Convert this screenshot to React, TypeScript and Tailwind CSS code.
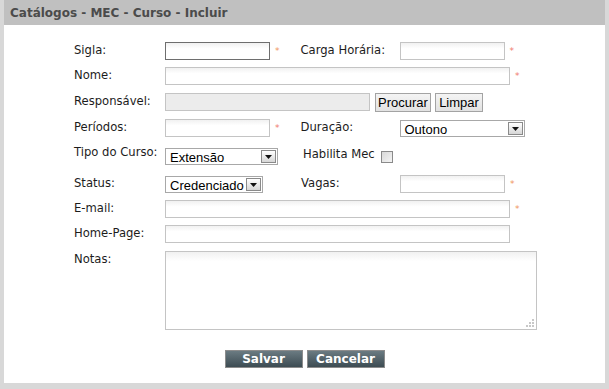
import type { ReactNode } from "react";

const labelCls = "w-[91px] shrink-0 pt-[1px] text-[11.6px] leading-[14px] text-[#1c1c1c]";
const inputBase =
  "h-[18px] border bg-gradient-to-b from-[#f1f1f1] to-white to-[35%] outline-none";

function Input({ width, dark = false }: { width: string; dark?: boolean }) {
  return <div className={`${inputBase} ${width} ${dark ? "border-[#6e6e6e]" : "border-[#c4c4c4]"}`} />;
}

function Star({ color = "text-[#f07a6e]" }: { color?: string }) {
  return <span className={`ml-[5px] mt-[4px] text-[9px] leading-[10px] ${color}`}>*</span>;
}

function Label({ children, className = "" }: { children: ReactNode; className?: string }) {
  return <span className={`${labelCls} ${className}`}>{children}</span>;
}

function Select({ value, width, className = "" }: { value: string; width: string; className?: string }) {
  return (
    <div
      className={`flex h-[17px] items-center justify-between border border-[#a8a8a8] bg-white pl-[4px] pr-[1px] font-['Liberation_Sans',Arial,sans-serif] text-[13px] leading-[15px] text-black ${width} ${className}`}
    >
      <span className="pt-[1px]">{value}</span>
      <span className="flex h-[13px] w-[15px] items-center justify-center border border-[#8a8a8a] bg-gradient-to-b from-white to-[#d6d6d6]">
        <svg width="7" height="4" viewBox="0 0 7 4">
          <path d="M0 0h7L3.5 4z" fill="#111" />
        </svg>
      </span>
    </div>
  );
}

function GrayButton({ children, width }: { children: ReactNode; width: string }) {
  return (
    <button
      type="button"
      className={`h-[19px] border border-[#a3a3a3] bg-gradient-to-b from-[#f4f4f4] to-[#e2e2e2] font-['Liberation_Sans',Arial,sans-serif] text-[13px] leading-[15px] text-black ${width}`}
    >
      {children}
    </button>
  );
}

function DarkButton({ children }: { children: ReactNode }) {
  return (
    <button
      type="button"
      className="h-[18px] w-[78px] border border-[#8c8c8c] bg-gradient-to-b from-[#6b7b82] to-[#3d4c53] text-[12px] font-bold leading-[14px] text-white"
    >
      {children}
    </button>
  );
}

export default function App() {
  return (
    <div className="h-[389px] w-[609px] bg-[#d8d8d8] pl-[4px] font-['DejaVu_Sans',Verdana,sans-serif]">
      <div className="h-[383px] w-[601px] bg-white">
        <div className="flex h-[25px] items-center bg-[#c0c0c0] pl-[6px] text-[12px] font-bold text-[#4b4b4b]">
          Catálogos - MEC - Curso - Incluir
        </div>

        <div className="flex flex-col pl-[70px] pt-[17px]">
          <div className="flex h-[25px] items-start">
            <Label>Sigla:</Label>
            <Input width="w-[105px]" dark />
            <Star color="text-[#f0955e]" />
            <Label className="ml-[21px] w-[99px]">Carga Horária:</Label>
            <Input width="w-[105px]" />
            <Star />
          </div>

          <div className="flex h-[26px] items-start">
            <Label>Nome:</Label>
            <Input width="w-[345px]" />
            <Star />
          </div>

          <div className="flex h-[26px] items-start">
            <Label>Responsável:</Label>
            <div className="h-[18px] w-[205px] border border-[#c4c4c4] bg-[#ececec]" />
            <div className="ml-[5px] flex gap-[4px]">
              <GrayButton width="w-[56px]">Procurar</GrayButton>
              <GrayButton width="w-[48px]">Limpar</GrayButton>
            </div>
          </div>

          <div className="flex h-[25px] items-start">
            <Label className="pt-0">Períodos:</Label>
            <Input width="w-[105px]" />
            <Star />
            <Label className="ml-[21px] w-[99px]">Duração:</Label>
            <Select value="Outono" width="w-[125px]" className="mt-[1px]" />
          </div>

          <div className="flex h-[31px] items-start">
            <Label>Tipo do Curso:</Label>
            <Select value="Extensão" width="w-[113px]" className="mt-[4px]" />
            <span className="ml-[25px] mt-[3px] text-[11.6px] leading-[14px] text-[#1c1c1c]">Habilita Mec</span>
            <span className="ml-[6px] mt-[7px] h-[12px] w-[12px] border border-[#8a8a8a] bg-gradient-to-br from-[#d8d8d8] to-[#f4f4f4]" />
          </div>

          <div className="flex h-[25px] items-start">
            <Label>Status:</Label>
            <Select value="Credenciado" width="w-[98px]" className="mt-[1px] h-[16px]" />
            <Label className="ml-[38px] w-[99px]">Vagas:</Label>
            <Input width="w-[105px]" />
            <Star color="text-[#f0955e]" />
          </div>

          <div className="flex h-[25px] items-start">
            <Label>E-mail:</Label>
            <Input width="w-[345px]" />
            <Star color="text-[#f0955e]" />
          </div>

          <div className="flex h-[26px] items-start">
            <Label>Home-Page:</Label>
            <Input width="w-[345px]" />
          </div>

          <div className="flex items-start">
            <Label>Notas:</Label>
            <div className="relative h-[79px] w-[372px] border border-[#c4c4c4] bg-gradient-to-b from-[#f1f1f1] to-white to-[12%]">
              <svg className="absolute bottom-[1px] right-[1px]" width="9" height="9" viewBox="0 0 9 9">
                <g fill="#c8c8c8">
                  <rect x="6" y="0" width="2" height="2" />
                  <rect x="3" y="3" width="2" height="2" />
                  <rect x="6" y="3" width="2" height="2" />
                  <rect x="0" y="6" width="2" height="2" />
                  <rect x="3" y="6" width="2" height="2" />
                  <rect x="6" y="6" width="2" height="2" />
                </g>
              </svg>
            </div>
          </div>
        </div>

        <div className="mt-[20px] flex justify-center gap-[4px]">
          <DarkButton>Salvar</DarkButton>
          <DarkButton>Cancelar</DarkButton>
        </div>
      </div>
    </div>
  );
}
